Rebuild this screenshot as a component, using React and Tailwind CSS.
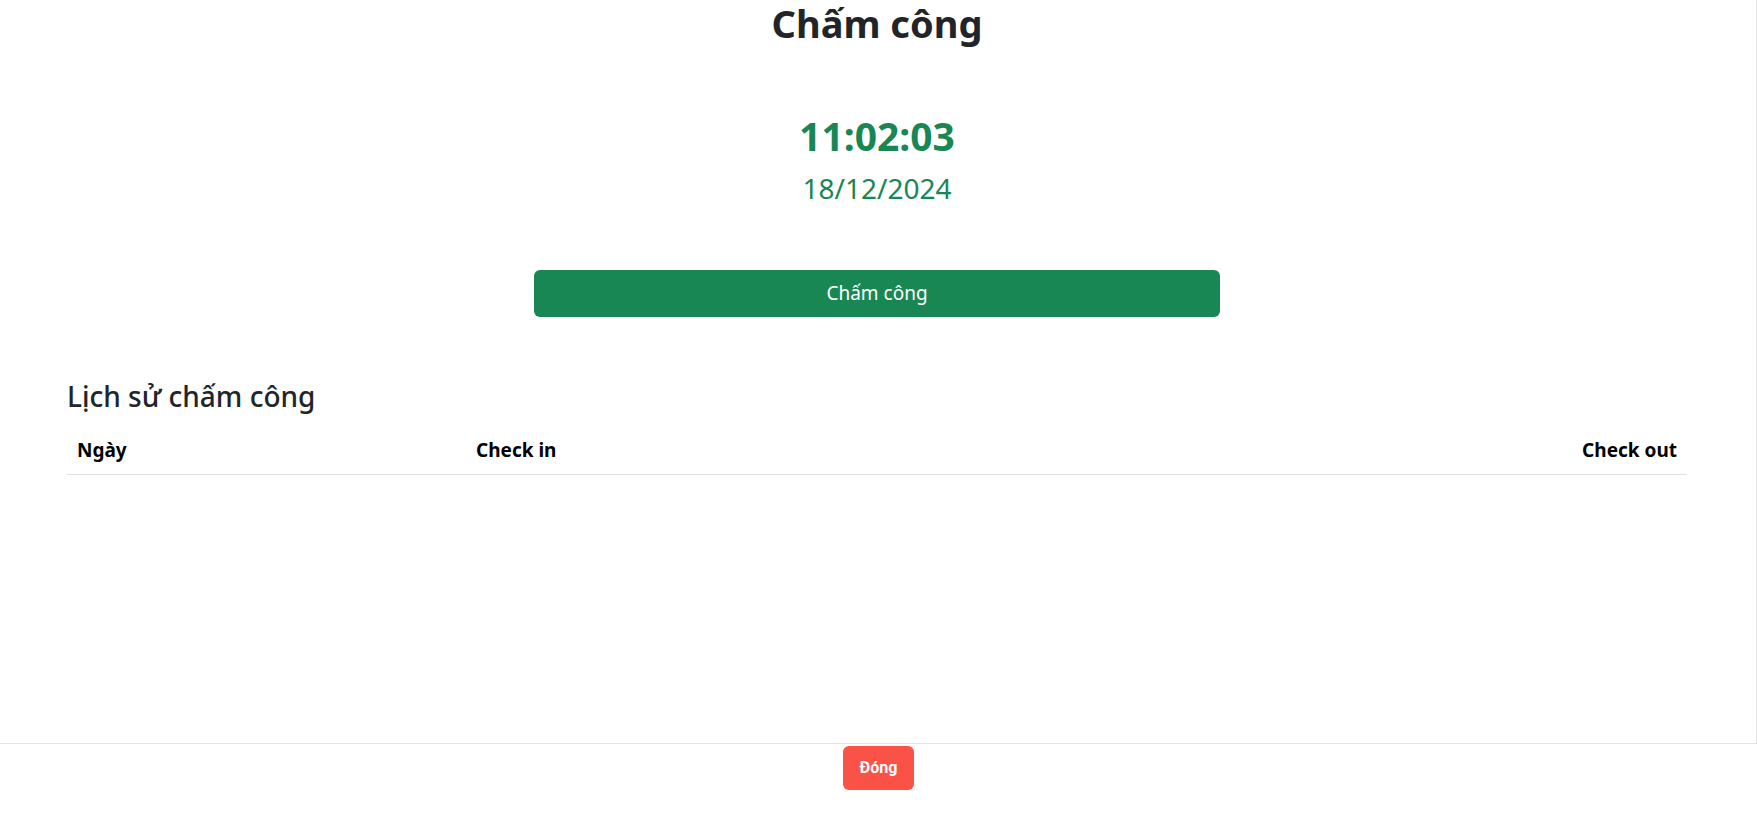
import React from "react";

const rows = [];

const App = () => {
  return (
    <div
      className="h-screen flex flex-col bg-white text-[#212529]"
      style={{ fontFamily: '"Noto Sans", "Open Sans", sans-serif' }}
    >
      <div className="flex-1 border-r border-b border-[#e5e5e5] pl-[67px] pr-[69px] overflow-hidden">
        <h1 className="text-center text-[38px] font-bold leading-[1.25]">
          Chấm công
        </h1>
        <div className="mt-[65px] text-center text-[#198754]">
          <div className="text-[39px] font-bold leading-[1.2]">11:02:03</div>
          <div className="text-[28px] leading-[1.2] mt-[13px]">18/12/2024</div>
        </div>
        <div className="flex justify-center mt-[64px]">
          <button className="w-[686px] h-[47px] rounded-[6px] bg-[#198754] text-white text-[19px]">
            Chấm công
          </button>
        </div>
        <h3 className="mt-[63px] text-[28px] leading-[1.2] font-medium">
          Lịch sử chấm công
        </h3>
        <table className="w-full mt-[14px] text-black">
          <thead>
            <tr className="border-b border-[#dee2e6]">
              <th className="w-1/4 text-left font-bold text-[19px] px-[10px] py-[9px]">
                Ngày
              </th>
              <th className="text-left font-bold text-[19px] px-[4px] py-[9px]">
                Check in
              </th>
              <th className="text-right font-bold text-[19px] px-[10px] py-[9px]">
                Check out
              </th>
            </tr>
          </thead>
          <tbody>
            {rows.map((r, i) => (
              <tr key={i}>
                <td>{r.date}</td>
                <td>{r.in}</td>
                <td>{r.out}</td>
              </tr>
            ))}
          </tbody>
        </table>
      </div>
      <div className="h-[71px] flex justify-center pt-[2px]">
        <button
          className="h-[44px] px-[17px] rounded-[6px] bg-[#fa5246] text-white text-[16px] font-bold"
          style={{ fontFamily: "Roboto, Arial, sans-serif" }}
        >
          Đóng
        </button>
      </div>
    </div>
  );
};

export default App;
